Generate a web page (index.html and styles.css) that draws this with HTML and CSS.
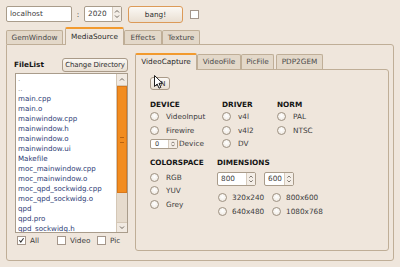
FILE: index.html
```html
<!DOCTYPE html>
<html lang="en">
<head>
    <meta charset="UTF-8">
    <title>pix_video settings</title>
    <link rel="stylesheet" href="styles.css">
</head>
<body>
    <div class="toolbar">
        <div class="field host">localhost</div>
        <span class="colon">:</span>
        <div class="spin port">
            <span class="spin-value">2020</span>
            <span class="spin-arrows"><svg viewBox="0 0 8 14"><path d="M2 5.5 L4 3.5 L6 5.5"/><path d="M2 8.5 L4 10.5 L6 8.5"/></svg></span>
        </div>
        <button class="button bang">bang!</button>
        <span class="box toggle"></span>
    </div>

    <div class="tabs">
        <div class="tab w-gem">GemWindow</div>
        <div class="tab current w-media">MediaSource</div>
        <div class="tab w-effects">Effects</div>
        <div class="tab w-texture">Texture</div>
    </div>

    <div class="panel">
        <div class="files">
            <div class="files-head">
                <span class="heading">FileList</span>
                <button class="button chdir">Change Directory</button>
            </div>
            <div class="list">
                <ul>
                    <li class="dim">.</li>
                    <li class="dim">..</li>
                    <li>main.cpp</li>
                    <li>main.o</li>
                    <li>mainwindow.cpp</li>
                    <li>mainwindow.h</li>
                    <li>mainwindow.o</li>
                    <li>mainwindow.ui</li>
                    <li>Makefile</li>
                    <li>moc_mainwindow.cpp</li>
                    <li>moc_mainwindow.o</li>
                    <li>moc_qpd_sockwidg.cpp</li>
                    <li>moc_qpd_sockwidg.o</li>
                    <li>qpd</li>
                    <li>qpd.pro</li>
                    <li>qpd_sockwidg.h</li>
                </ul>
                <div class="scroll">
                    <span class="scroll-btn up"><svg viewBox="0 0 9 11"><path d="M2.5 6.5 L4.5 4.5 L6.5 6.5"/></svg></span>
                    <span class="thumb"><span class="grip"></span></span>
                    <span class="track"></span>
                    <span class="scroll-btn down"><svg viewBox="0 0 9 9"><path d="M2.5 3.5 L4.5 5.5 L6.5 3.5"/></svg></span>
                </div>
            </div>
            <div class="filters">
                <label class="opt opt-all"><span class="box"><svg viewBox="0 0 9 9"><path d="M1.8 4.2 L3.6 6.6 L7.2 1.6"/></svg></span>All</label>
                <label class="opt opt-video"><span class="box"></span>Video</label>
                <label class="opt"><span class="box"></span>Pic</label>
            </div>
        </div>

        <div class="capture">
            <div class="subtabs">
                <div class="subtab current s-capture">VideoCapture</div>
                <div class="subtab s-file">VideoFile</div>
                <div class="subtab s-pic">PicFile</div>
                <div class="subtab s-pdp">PDP2GEM</div>
            </div>
            <div class="subpanel">
                <button class="button on">ON</button>
                <svg class="cursor" viewBox="0 0 10 15"><path d="M0.5 0.5 L0.5 11.5 L3.2 9 L5 13.2 L6.8 12.4 L5 8.3 L8.5 8.3 Z"/></svg>

                <div class="grid-top">
                    <span class="heading">DEVICE</span>
                    <span class="heading">DRIVER</span>
                    <span class="heading">NORM</span>

                    <label class="radio"><span class="dot"></span>VideoInput</label>
                    <label class="radio"><span class="dot"></span>v4l</label>
                    <label class="radio"><span class="dot"></span>PAL</label>

                    <label class="radio"><span class="dot"></span>Firewire</label>
                    <label class="radio"><span class="dot"></span>v4l2</label>
                    <label class="radio"><span class="dot"></span>NTSC</label>

                    <div class="device">
                        <div class="spin small">
                            <span class="spin-value">0</span>
                            <span class="spin-arrows"><svg viewBox="0 0 8 10"><path d="M2 4 L4 2.5 L6 4"/><path d="M2 6 L4 7.5 L6 6"/></svg></span>
                        </div>
                        <span>Device</span>
                    </div>
                    <label class="radio"><span class="dot"></span>DV</label>
                    <span></span>
                </div>

                <div class="grid-bottom">
                    <div class="colorspace">
                        <span class="heading">COLORSPACE</span>
                        <label class="radio"><span class="dot"></span>RGB</label>
                        <label class="radio"><span class="dot"></span>YUV</label>
                        <label class="radio"><span class="dot"></span>Grey</label>
                    </div>
                    <div class="dimensions">
                        <span class="heading">DIMENSIONS</span>
                        <div class="sizes">
                            <div class="spin width">
                                <span class="spin-value">800</span>
                                <span class="spin-arrows"><svg viewBox="0 0 8 14"><path d="M2 5.5 L4 3.5 L6 5.5"/><path d="M2 8.5 L4 10.5 L6 8.5"/></svg></span>
                            </div>
                            <div class="spin height">
                                <span class="spin-value">600</span>
                                <span class="spin-arrows"><svg viewBox="0 0 8 14"><path d="M2 5.5 L4 3.5 L6 5.5"/><path d="M2 8.5 L4 10.5 L6 8.5"/></svg></span>
                            </div>
                        </div>
                        <div class="presets">
                            <label class="radio"><span class="dot"></span>320x240</label>
                            <label class="radio"><span class="dot"></span>800x600</label>
                            <label class="radio"><span class="dot"></span>640x480</label>
                            <label class="radio"><span class="dot"></span>1080x768</label>
                        </div>
                    </div>
                </div>
            </div>
        </div>
    </div>
</body>
</html>
```
FILE: styles.css
```css
:root {
    /* Ubuntu "Human" palette */
    --bg: #efe6dc;
    --tab-bg: #e3d8c9;
    --border: #bfae97;
    --field-border: #a99c8b;
    --orange: #f29a2e;
    --text: #3c3c3c;
    --list-text: #2c3a74;
}

body {
    margin: 0;
    width: 400px;
    height: 267px;
    overflow: hidden;
    background-color: var(--bg);
    font-family: "DejaVu Sans", sans-serif;
    font-size: 7.3px;
    color: var(--text);
}

/* top row */

.toolbar {
    display: flex;
    align-items: center;
    height: 18px;
    padding: 5px 0 0 6px;
}

.field {
    box-sizing: border-box;
    border: 1px solid var(--field-border);
    border-radius: 2px;
    background-color: #fff;
}

.host {
    width: 66px;
    height: 16px;
    padding-left: 3px;
    line-height: 14px;
}

.colon {
    width: 12px;
    text-align: center;
}

.spin {
    display: flex;
    box-sizing: border-box;
    border: 1px solid var(--field-border);
    border-radius: 2px;
    background-color: #fff;
}

.spin-value {
    flex: 1;
    padding-left: 3px;
}

.spin-arrows {
    display: flex;
    width: 8px;
    border-left: 1px solid #d6cbbd;
    background-color: #f4eee7;
}

.spin-arrows svg {
    width: 8px;
    height: 100%;
}

.spin-arrows path,
.scroll-btn path {
    fill: none;
    stroke: #6d665e;
    stroke-width: 1;
}

.port {
    width: 38px;
    height: 16px;
    line-height: 14px;
}

.button {
    box-sizing: border-box;
    padding: 0;
    border: 1px solid #a99a88;
    border-radius: 3px;
    background: linear-gradient(#fbf8f4, #e9dfd2);
    font-family: inherit;
    font-size: 7.3px;
    color: #2e2e2e;
    white-space: nowrap;
}

.bang {
    margin-left: 6px;
    width: 55px;
    height: 17px;
    border-color: #dc9a58;
}

.box {
    display: inline-flex;
    box-sizing: border-box;
    width: 9px;
    height: 9px;
    border: 1px solid #a4968a;
    background-color: #fff;
}

.box svg {
    width: 7px;
    height: 7px;
}

.box path {
    fill: none;
    stroke: #2c2c2c;
    stroke-width: 1.3;
}

.toggle {
    margin-left: 7px;
}

/* main tab widget */

.tabs {
    display: flex;
    align-items: flex-end;
    height: 17px;
    margin: 4px 0 0 6px;
}

.tab,
.subtab {
    box-sizing: border-box;
    border: 1px solid var(--border);
    border-bottom: none;
    border-radius: 2px 2px 0 0;
    background-color: var(--tab-bg);
    text-align: center;
    color: #4a4a4a;
}

.tab {
    height: 14px;
    line-height: 13px;
}

.tab.current,
.subtab.current {
    position: relative;
    z-index: 1;
    margin-bottom: -1px;
    border-top: 2px solid var(--orange);
    background-color: var(--bg);
    color: #2a2a2a;
}

.tab.current {
    height: 18px;
    line-height: 15px;
}

.w-gem { width: 57px; }
.w-media { width: 59px; margin-left: 2px; }
.w-effects { width: 38px; }
.w-texture { width: 38px; }

.panel {
    display: flex;
    gap: 7px;
    box-sizing: border-box;
    width: 388px;
    height: 217px;
    margin-left: 6px;
    padding: 12px 4px 0 7px;
    border: 1px solid var(--border);
    border-radius: 0 3px 3px 3px;
}

.heading {
    font-weight: bold;
    color: #141414;
}

/* file list */

.files {
    width: 114px;
}

.files-head {
    display: flex;
    justify-content: space-between;
    align-items: center;
    height: 15px;
}

.chdir {
    width: 66px;
    height: 14px;
    font-size: 7px;
    letter-spacing: -0.1px;
}

.list {
    display: flex;
    box-sizing: border-box;
    width: 113px;
    height: 160px;
    margin: 1px 0 0 1px;
    border: 1px solid var(--field-border);
    background-color: #fff;
}

.list ul {
    flex: 1;
    margin: 0;
    padding: 0 0 0 2px;
    list-style: none;
    overflow: hidden;
    font-size: 7.1px;
    line-height: 10px;
    color: var(--list-text);
}

.list .dim {
    color: #8a8a8a;
}

.scroll {
    display: flex;
    flex-direction: column;
    width: 10px;
    border-left: 1px solid #d4c7b6;
    background-color: #e6dbcd;
}

.scroll-btn {
    display: flex;
    background-color: #f1eae2;
}

.scroll-btn.up {
    height: 11px;
    border-bottom: 1px solid #d4c7b6;
}

.scroll-btn.down {
    height: 9px;
    border-top: 1px solid #d4c7b6;
}

.scroll-btn svg {
    width: 100%;
    height: 100%;
}

.thumb {
    display: flex;
    justify-content: center;
    align-items: center;
    box-sizing: border-box;
    height: 107px;
    border: 1px solid #d9781a;
    background-color: #f28c1f;
}

.grip {
    width: 4px;
    height: 4px;
    border-top: 1px solid #b9630f;
    border-bottom: 1px solid #b9630f;
}

.track {
    flex: 1;
}

.filters {
    display: flex;
    align-items: center;
    height: 9px;
    margin: 3px 0 0 3px;
}

.opt {
    display: flex;
    align-items: center;
    gap: 4px;
}

.opt-all,
.opt-video {
    width: 40px;
}

/* capture tab widget */

.capture {
    width: 254px;
    margin-top: -4px;
}

.subtabs {
    display: flex;
    align-items: flex-end;
    height: 16px;
}

.subtab {
    height: 15px;
    line-height: 14px;
}

.subtab.current {
    height: 17px;
    line-height: 14px;
}

.s-capture { width: 62px; }
.s-file { width: 44px; }
.s-pic { width: 33px; }
.s-pdp { width: 47px; margin-left: 2px; }

.subpanel {
    position: relative;
    box-sizing: border-box;
    height: 182px;
    padding: 7px 0 0 14px;
    border: 1px solid var(--border);
    border-radius: 0 3px 3px 3px;
}

.on {
    display: block;
    width: 20px;
    height: 13px;
    font-size: 7px;
}

.cursor {
    position: absolute;
    left: 18px;
    top: 5px;
    width: 10px;
    height: 15px;
}

.cursor path {
    fill: #fff;
    stroke: #1e1e1e;
    stroke-width: 1;
}

.radio {
    display: flex;
    align-items: center;
    gap: 7px;
}

.dot {
    box-sizing: border-box;
    width: 9px;
    height: 9px;
    border: 1px solid #9d9182;
    border-radius: 50%;
    background: radial-gradient(circle at 50% 40%, #fff, #ebe4db);
}

.grid-top {
    display: grid;
    grid-template-columns: 72px 55px auto;
    grid-template-rows: 12px repeat(3, 13.5px);
    align-items: center;
    margin-top: 8px;
}

.device {
    display: flex;
    align-items: center;
    gap: 1px;
}

.spin.small {
    width: 28px;
    height: 10px;
    line-height: 8px;
    font-size: 6.5px;
}

.spin.small .spin-value {
    padding-left: 4px;
}

.grid-bottom {
    display: grid;
    grid-template-columns: 67px auto;
    margin-top: 6.5px;
}

.colorspace,
.dimensions {
    display: flex;
    flex-direction: column;
}

.colorspace .heading,
.dimensions .heading {
    height: 12px;
    line-height: 12px;
}

.colorspace .radio {
    height: 13.5px;
}

.colorspace .heading + .radio {
    margin-top: 1.5px;
}

.sizes {
    display: flex;
    gap: 8px;
    margin-top: 3px;
}

.spin.width,
.spin.height {
    height: 14px;
    line-height: 12px;
}

.spin.width { width: 39px; }
.spin.height { width: 30px; }

.presets {
    display: grid;
    grid-template-columns: 54px auto;
    grid-auto-rows: 14px;
    align-items: center;
    margin: 4px 0 0 1px;
}

.presets .radio {
    gap: 5px;
}
```
